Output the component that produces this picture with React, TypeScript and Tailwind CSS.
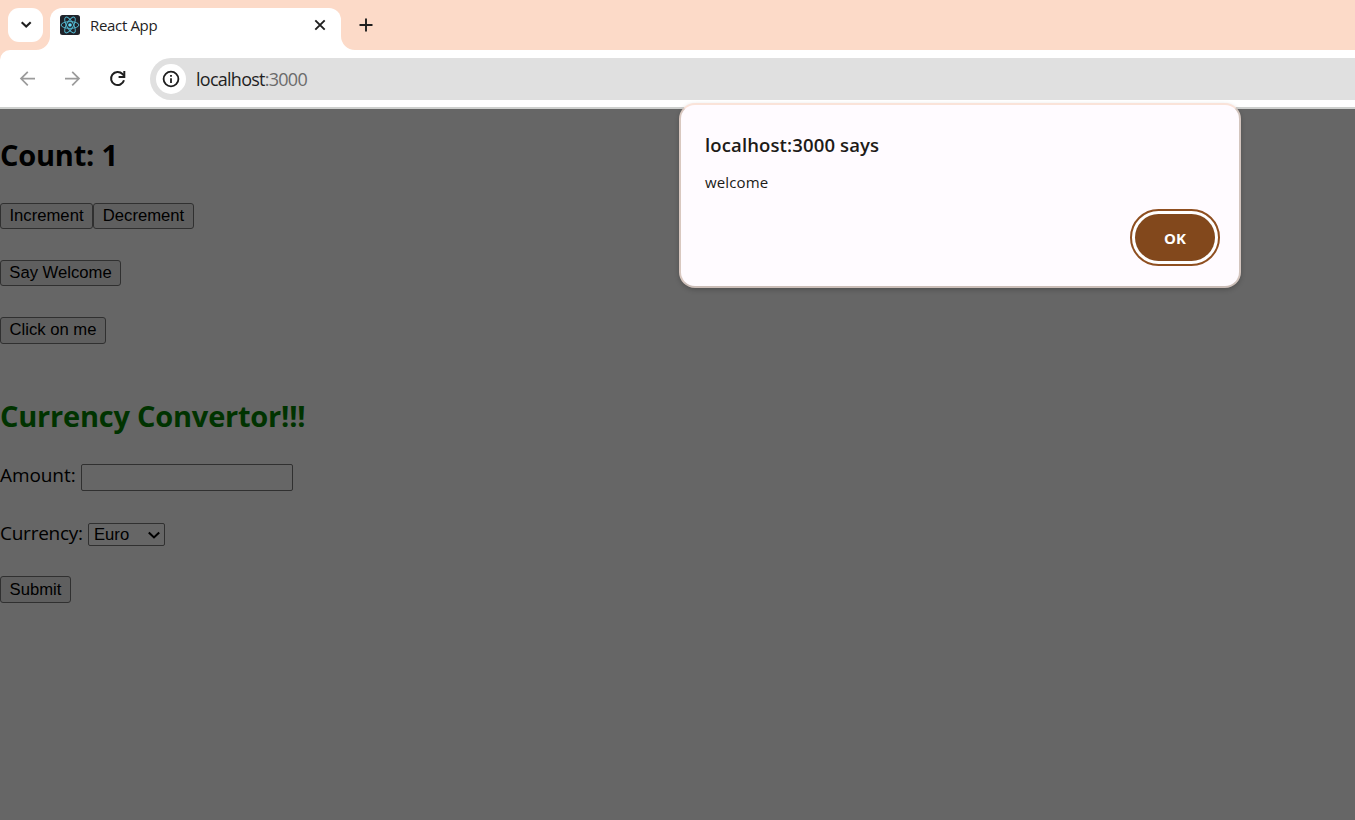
import type { ReactNode } from "react";

function ReactLogo() {
  return (
    <svg className="h-5 w-5 shrink-0" viewBox="0 0 20 20">
      <rect width="20" height="20" rx="2.5" fill="#20232a" />
      <g fill="none" stroke="#53b9d1" strokeWidth="0.95">
        <ellipse cx="10" cy="10" rx="8.9" ry="3.4" />
        <ellipse cx="10" cy="10" rx="8.9" ry="3.4" transform="rotate(60 10 10)" />
        <ellipse cx="10" cy="10" rx="8.9" ry="3.4" transform="rotate(120 10 10)" />
      </g>
      <circle cx="10" cy="10" r="1.8" fill="#61dafb" />
    </svg>
  );
}

function TabStrip() {
  return (
    <div className="flex h-[50px] items-start bg-[#fcdac8]">
      <div className="ml-2 mt-2 flex h-[34px] w-[35px] items-center justify-center rounded-[11px] bg-white">
        <svg className="h-5 w-5" viewBox="0 0 20 20" fill="none" stroke="#1f1f1f" strokeWidth="2.1">
          <path d="M5.7 7.3 10.2 11.6 14.7 7.3" />
        </svg>
      </div>
      <div className="relative ml-[7px] mt-[7.5px] flex h-[42.5px] w-[290.5px] rounded-t-[12px] bg-white pl-[10px] pt-[7.5px]">
        <svg className="absolute -left-[14px] bottom-0 h-[14px] w-[14px]" viewBox="0 0 14 14">
          <path d="M14 0A14 14 0 0 1 0 14H14Z" fill="#fff" />
        </svg>
        <svg className="absolute -right-[14px] bottom-0 h-[14px] w-[14px]" viewBox="0 0 14 14">
          <path d="M0 0A14 14 0 0 0 14 14H0Z" fill="#fff" />
        </svg>
        <ReactLogo />
        <span className="ml-[10px] w-[223px] text-[15px] leading-[21px] tracking-[-0.33px] text-[#1f1f1f]">React App</span>
        <svg className="h-5 w-4 shrink-0" viewBox="0 0 16 20" fill="none" stroke="#1f1f1f" strokeWidth="1.9">
          <path d="M2.3 5.3 11.7 14.7M11.7 5.3 2.3 14.7" />
        </svg>
      </div>
      <svg className="ml-[17.5px] mt-[17px] h-4 w-4" viewBox="0 0 16 16" fill="none" stroke="#1f1f1f" strokeWidth="1.9">
        <path d="M8 1.5V14.5M1.5 8H14.5" />
      </svg>
    </div>
  );
}

function Toolbar() {
  return (
    <div className="h-[59px] bg-[#fcdac8]">
      <div className="flex h-full rounded-tl-[10px] border-b-2 border-[#cdcfcd] bg-white pt-2">
        <svg className="ml-[17px] mt-[10px] h-5 w-5" viewBox="0 0 20 20" fill="none" stroke="#9b9b9b" strokeWidth="1.7">
          <path d="M18 10.6H4.3M10.8 3.8 4 10.6 10.8 17.4" />
        </svg>
        <svg className="ml-[25px] mt-[10px] h-5 w-5" viewBox="0 0 20 20" fill="none" stroke="#9b9b9b" strokeWidth="1.7">
          <path d="M3 10.6H16.7M10.2 3.8 17 10.6 10.2 17.4" />
        </svg>
        <svg className="ml-[25px] mt-[10px] h-5 w-5" viewBox="0 0 20 20" fill="none" stroke="#1f1f1f" strokeWidth="2">
          <path d="M17 12.3A6.6 6.6 0 1 1 15.5 6L17 7.5" />
          <path d="M17.3 3V8.9H11.6" />
        </svg>
        <div className="ml-[23px] flex h-[42px] flex-1 items-center rounded-l-full bg-[#e0e0e0] pl-[6px]">
          <div className="flex h-[30px] w-[30px] items-center justify-center rounded-full bg-white">
            <svg className="h-[18px] w-[18px]" viewBox="0 0 18 18" fill="none" stroke="#1f1f1f" strokeWidth="1.8">
              <circle cx="9" cy="9" r="7.4" />
              <path d="M9 8.3V13M9 5V6.8" />
            </svg>
          </div>
          <span className="ml-[10px] text-[18px] tracking-[-0.74px] text-[#1f1f1f]">
            localhost<span className="text-[#6b6b6b]">:3000</span>
          </span>
        </div>
      </div>
    </div>
  );
}

function NativeButton({ children, className }: { children: ReactNode; className: string }) {
  return (
    <button
      className={`flex items-center justify-center rounded-[3px] border border-[#303030] bg-[#5f5f5f] font-['Liberation_Sans',sans-serif] text-[16.67px] leading-5 whitespace-nowrap text-black ${className}`}
    >
      {children}
    </button>
  );
}

function CounterPage() {
  return (
    <main className="h-[711px] bg-[#666666] pt-[26px] text-black">
      <h1 className="text-[29px] leading-[40px] font-bold tracking-[-0.22px]">Count: 1</h1>
      <div className="mt-[28px] flex">
        <NativeButton className="h-[26px] w-[93px] pb-px">Increment</NativeButton>
        <NativeButton className="h-[26px] w-[101px] pb-px">Decrement</NativeButton>
      </div>
      <NativeButton className="mt-[31px] h-[26px] w-[121px] pb-px">Say Welcome</NativeButton>
      <NativeButton className="mt-[31px] h-[27px] w-[106px] pb-[2px]">Click on me</NativeButton>
      <h1 className="mt-[52px] text-[29px] leading-[40px] font-bold tracking-[-0.22px] text-[#003300]">Currency Convertor!!!</h1>
      <form>
        <label className="mt-[28px] flex h-[27px] items-center text-[19px]">
          <span className="w-[81px] pb-1 tracking-[-0.08px]">Amount:</span>
          <input className="h-[27px] w-[212px] rounded-[2px] border border-[#303030] bg-[#666666] px-1 outline-none" />
        </label>
        <div className="mt-[32px] flex h-[23px] items-center text-[19px]">
          <span className="w-[88px] pb-[2px] tracking-[-0.25px]">Currency:</span>
          <div className="flex h-[23px] w-[77px] items-center justify-between rounded-[2px] border border-[#303030] pl-[5px] pr-1 font-['Liberation_Sans',sans-serif] text-[16.67px] leading-5">
            Euro
            <svg className="h-3 w-3" viewBox="0 0 12 12" fill="none" stroke="#000" strokeWidth="2.1">
              <path d="M.8 3.4 6 8.4 11.2 3.4" />
            </svg>
          </div>
        </div>
        <NativeButton className="mt-[30px] h-[27px] w-[71px]">Submit</NativeButton>
      </form>
    </main>
  );
}

function AlertDialog() {
  return (
    <div
      role="dialog"
      className="absolute left-[679px] top-[103px] flex h-[185px] w-[562px] flex-col rounded-[16px] border-2 border-t-[#fae3d9] border-r-[#d3c5be] border-b-[#cbbdb7] border-l-[#d9c8c0] bg-[#fffbff] pl-6 pr-[19px] pt-[27px] shadow-[0_2px_5px_rgba(0,0,0,0.2)]"
    >
      <h2 className="text-[18.5px] leading-[26px] font-semibold tracking-[0.13px] text-[#201a17]">localhost:3000 says</h2>
      <p className="mt-[13px] text-[15px] leading-[22px] tracking-[0.13px] text-[#201a17]">welcome</p>
      <button className="mt-[16px] flex h-[57px] w-[90px] items-center justify-center self-end rounded-full border-[2.5px] border-[#8f4f20] bg-white p-[3px]">
        <span className="flex h-full w-full items-center justify-center rounded-full bg-[#82481c] pt-px text-[15px] font-bold text-white">OK</span>
      </button>
    </div>
  );
}

export default function App() {
  return (
    <div className="relative h-[820px] w-[1355px] overflow-hidden bg-white font-['Open_Sans','Noto_Sans',sans-serif]">
      <TabStrip />
      <Toolbar />
      <CounterPage />
      <AlertDialog />
    </div>
  );
}
